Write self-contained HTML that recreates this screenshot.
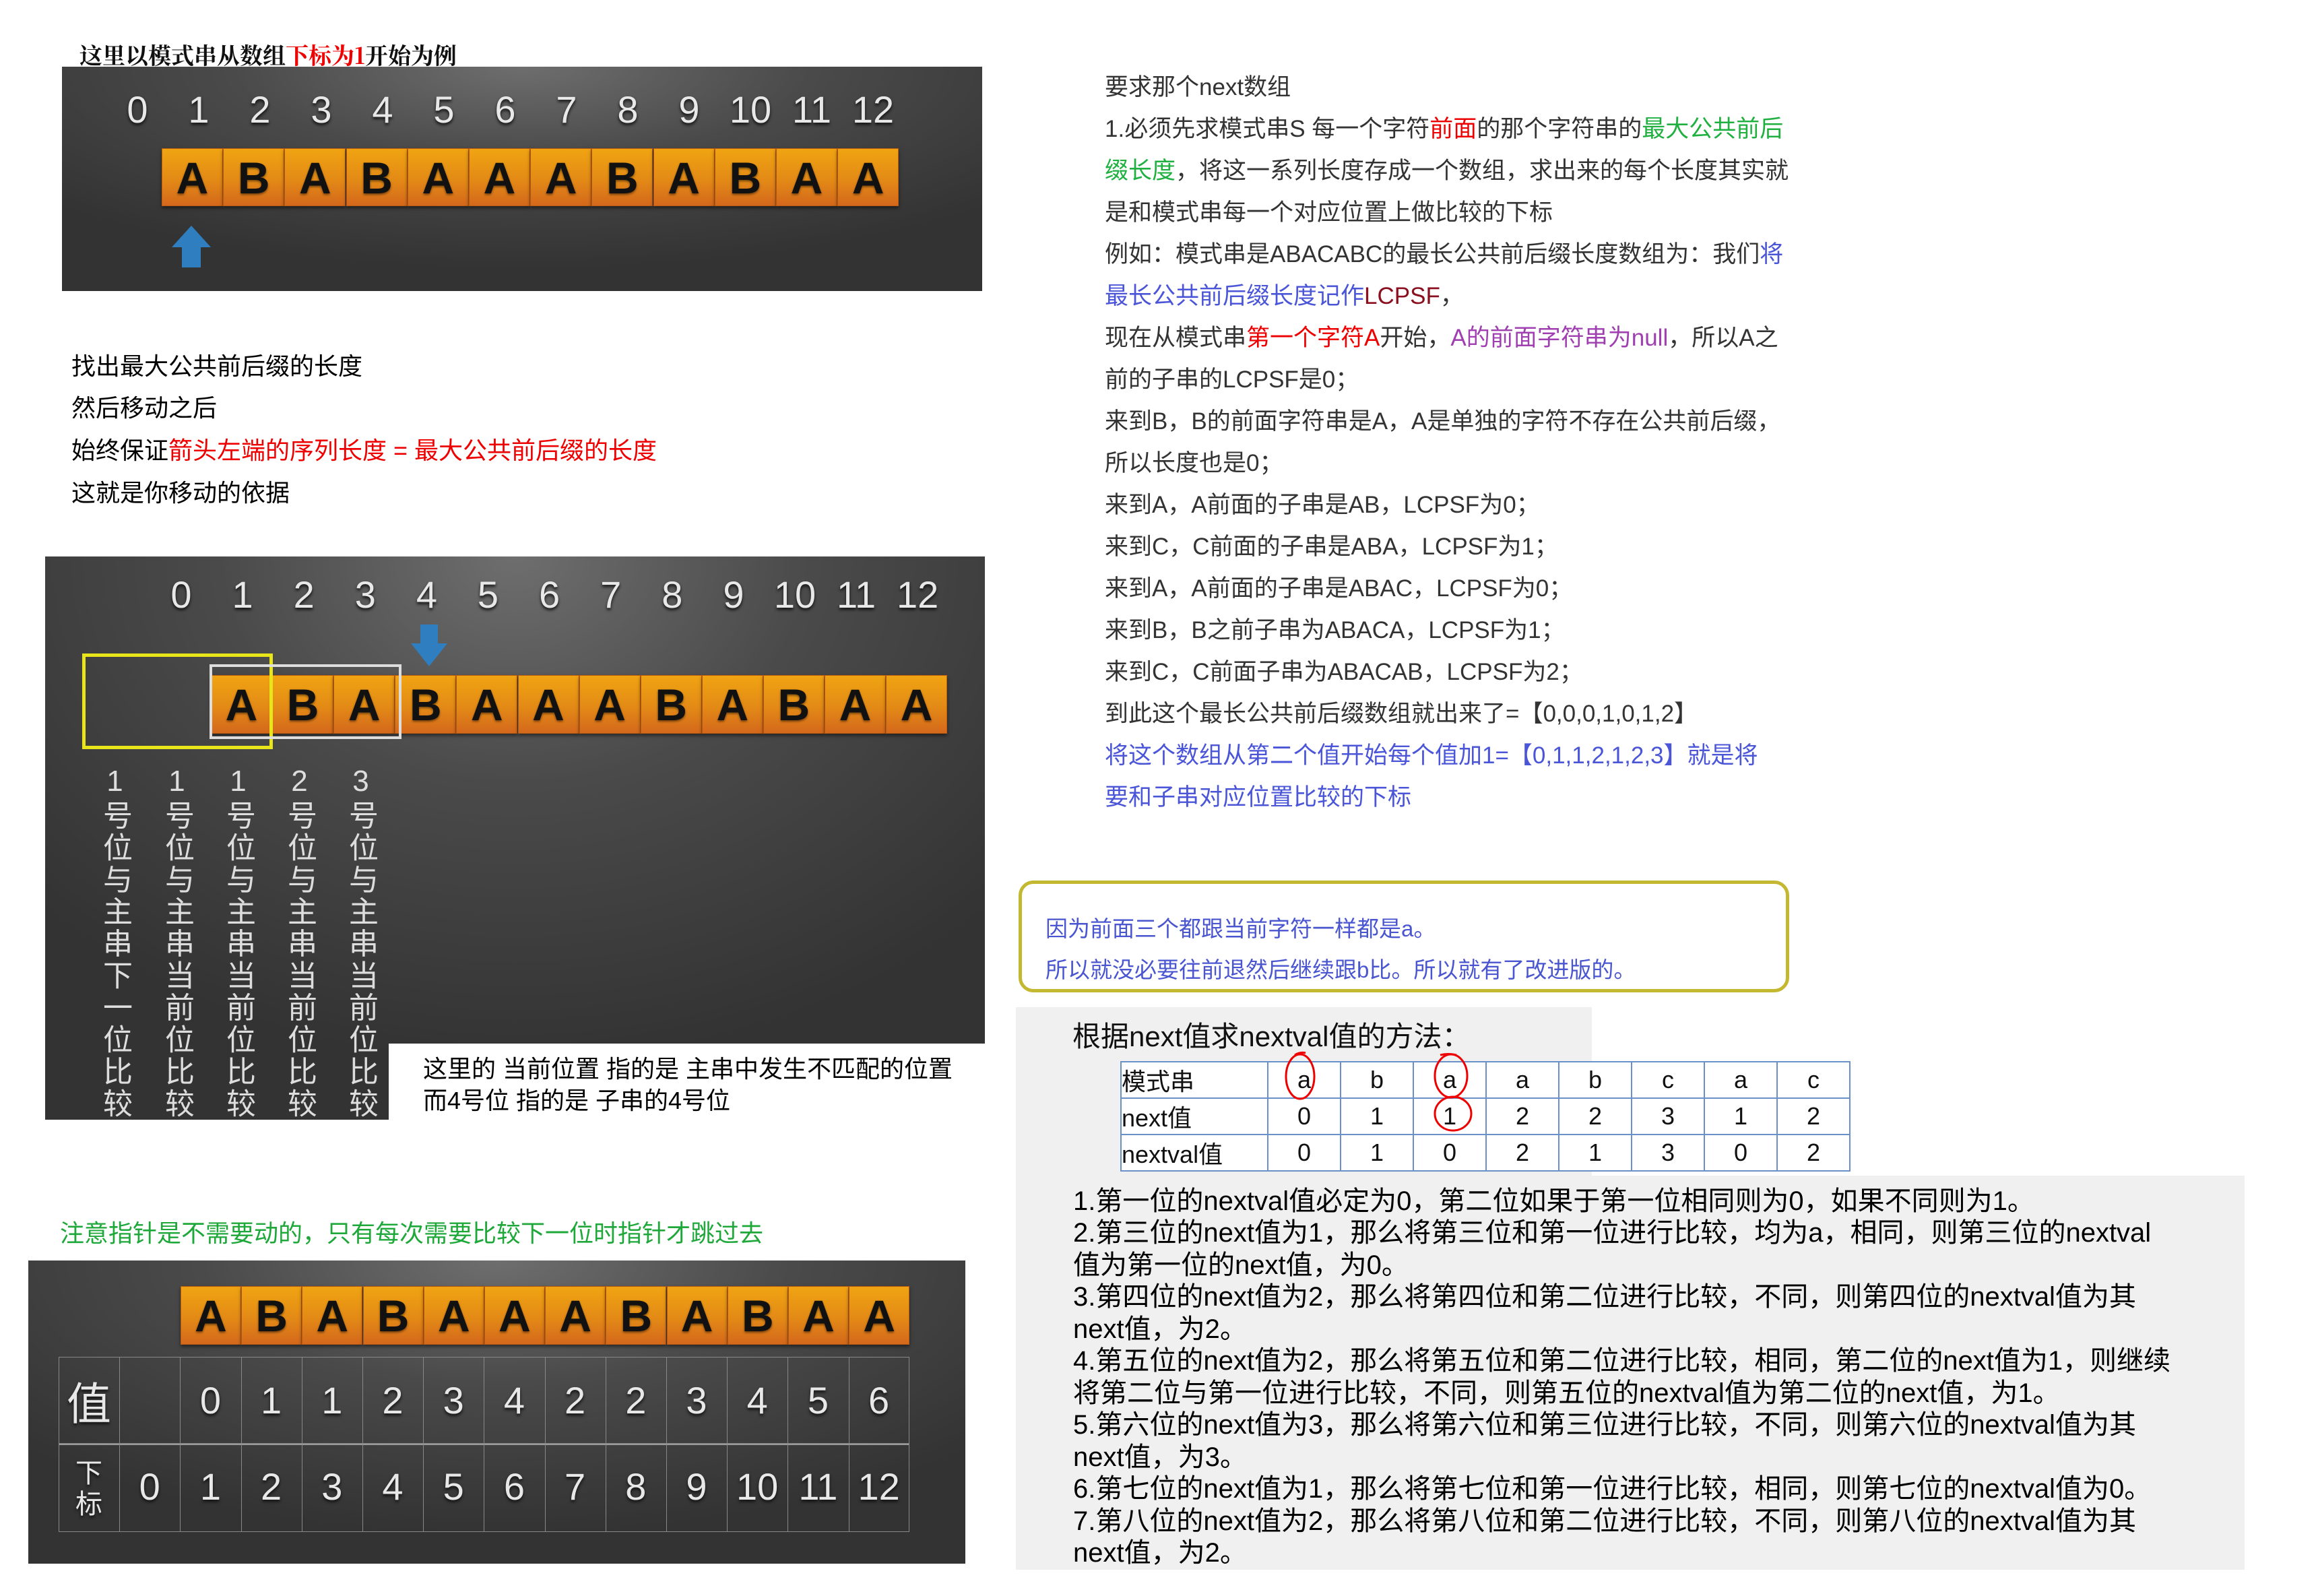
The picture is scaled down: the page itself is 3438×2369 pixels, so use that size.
<!DOCTYPE html>
<html><head><meta charset="utf-8">
<style>
*{margin:0;padding:0;box-sizing:border-box}
body{width:3438px;height:2369px;background:#fff;position:relative;overflow:hidden;font-family:"Liberation Sans","Noto Sans CJK SC",sans-serif}
.a{position:absolute;white-space:nowrap}
.panel{position:absolute;background:radial-gradient(ellipse 70% 90% at 50% 0%,#6e6e6e 0%,#4a4a4a 45%,#333 100%)}
.num{position:absolute;color:#e8e8e8;font-size:56px;text-align:center;width:90px;text-shadow:0 3px 4px #111;font-family:"Liberation Sans",sans-serif}
.tile{position:absolute;background:linear-gradient(#f0a412,#e38a16 55%,#d4681c);border:1px solid #b85a10;color:#111;font-weight:bold;font-size:66px;text-align:center;box-shadow:0 3px 5px rgba(0,0,0,.5);text-shadow:0 2px 3px rgba(0,0,0,.5)}
.vt{position:absolute;writing-mode:vertical-rl;text-orientation:upright;color:#ddd;font-size:44px;letter-spacing:3.5px;top:1135px;font-family:"Liberation Sans","Noto Sans CJK SC",sans-serif}
.r{font-size:35px;color:#333;left:1640px}
.l{font-size:36px;color:#000;left:106px}
.li{font-size:40px;color:#000;left:1593px}
table{border-collapse:collapse}
td{border:2px solid #6a90c8;font-size:36px;height:49px;text-align:center;color:#111}
</style></head><body>

<div class="a" style="left:118px;top:56px;font-size:34px;font-family:'Noto Serif CJK SC',serif;font-weight:bold;color:#111">这里以模式串从数组<span style="color:#e00">下标为1</span>开始为例</div>

<div class="panel" style="left:92px;top:99px;width:1366px;height:333px"></div>
<div id="p1"></div>
<svg class="a" style="left:253px;top:333px" width="62" height="66"><path d="M31 2 L60 34 L45 34 L45 64 L17 64 L17 34 L2 34 Z" fill="#2f7fc0"/></svg>

<div class="a l" style="top:515px">找出最大公共前后缀的长度</div>
<div class="a l" style="top:577px">然后移动之后</div>
<div class="a l" style="top:640px">始终保证<span style="color:#e00">箭头左端的序列长度 = 最大公共前后缀的长度</span></div>
<div class="a l" style="top:703px">这就是你移动的依据</div>

<div class="panel" style="left:67px;top:826px;width:1395px;height:836px"></div>
<div id="p2"></div>
<div class="a" style="left:122px;top:970px;width:283px;height:142px;border:5px solid #e8e61a"></div>
<div class="a" style="left:311px;top:986px;width:285px;height:111px;border:4px solid #ddd"></div>
<svg class="a" style="left:608px;top:925px" width="58" height="66"><path d="M16 2 L42 2 L42 30 L56 30 L29 64 L2 30 L16 30 Z" fill="#2f7fc0"/></svg>
<div class="vt" style="left:138px">1号位与主串下一位比较</div>
<div class="vt" style="left:230px">1号位与主串当前位比较</div>
<div class="vt" style="left:321px">1号位与主串当前位比较</div>
<div class="vt" style="left:412px">2号位与主串当前位比较</div>
<div class="vt" style="left:503px">3号位与主串当前位比较</div>
<div class="a" style="left:577px;top:1549px;width:900px;height:130px;background:#fff"></div>
<div class="a" style="left:628px;top:1558px;font-size:36px;color:#000">这里的 当前位置 指的是 主串中发生不匹配的位置</div>
<div class="a" style="left:628px;top:1605px;font-size:36px;color:#000">而4号位 指的是 子串的4号位</div>

<div class="a" style="left:89px;top:1802px;font-size:36px;color:#1fa83a">注意指针是不需要动的，只有每次需要比较下一位时指针才跳过去</div>

<div class="panel" style="left:42px;top:1871px;width:1391px;height:450px"></div>
<div id="p3"></div>

<div class="a r" style="top:101px">要求那个next数组</div>
<div class="a r" style="top:163px">1.必须先求模式串S 每一个字符<span style="color:#e00">前面</span>的那个字符串的<span style="color:#1fb040">最大公共前后</span></div>
<div class="a r" style="top:225px"><span style="color:#1fb040">缀长度</span>，将这一系列长度存成一个数组，求出来的每个长度其实就</div>
<div class="a r" style="top:287px">是和模式串每一个对应位置上做比较的下标</div>
<div class="a r" style="top:349px">例如：模式串是ABACABC的最长公共前后缀长度数组为：我们<span style="color:#4a55d8">将</span></div>
<div class="a r" style="top:411px"><span style="color:#4a55d8">最长公共前后缀长度记作</span><span style="color:#8a1020">LCPSF</span>，</div>
<div class="a r" style="top:473px">现在从模式串<span style="color:#e00">第一个字符A</span>开始，<span style="color:#a040b0">A的前面字符串为null</span>，所以A之</div>
<div class="a r" style="top:535px">前的子串的LCPSF是0；</div>
<div class="a r" style="top:597px">来到B，B的前面字符串是A，A是单独的字符不存在公共前后缀，</div>
<div class="a r" style="top:659px">所以长度也是0；</div>
<div class="a r" style="top:721px">来到A，A前面的子串是AB，LCPSF为0；</div>
<div class="a r" style="top:783px">来到C，C前面的子串是ABA，LCPSF为1；</div>
<div class="a r" style="top:845px">来到A，A前面的子串是ABAC，LCPSF为0；</div>
<div class="a r" style="top:907px">来到B，B之前子串为ABACA，LCPSF为1；</div>
<div class="a r" style="top:969px">来到C，C前面子串为ABACAB，LCPSF为2；</div>
<div class="a r" style="top:1031px">到此这个最长公共前后缀数组就出来了=【0,0,0,1,0,1,2】</div>
<div class="a r" style="top:1093px;color:#4a55d8">将这个数组从第二个值开始每个值加1=【0,1,1,2,1,2,3】就是将</div>
<div class="a r" style="top:1155px;color:#4a55d8">要和子串对应位置比较的下标</div>

<div class="a" style="left:1512px;top:1307px;width:1144px;height:166px;border:5px solid #c4b830;border-radius:22px"></div>
<div class="a" style="left:1552px;top:1352px;font-size:33px;color:#4a55d0">因为前面三个都跟当前字符一样都是a。</div>
<div class="a" style="left:1552px;top:1413px;font-size:33px;color:#4a55d0">所以就没必要往前退然后继续跟b比。所以就有了改进版的。</div>

<div class="a" style="left:1508px;top:1495px;width:855px;height:260px;background:#f0f0f0"></div>
<div class="a" style="left:1508px;top:1745px;width:1824px;height:585px;background:#f0f0f0"></div>
<div class="a" style="left:1592px;top:1505px;font-size:42px;color:#111">根据next值求nextval值的方法：</div>
<table class="a" style="left:1663px;top:1575px;background:#fff">
<tr><td style="width:218px;text-align:left">模式串</td><td style="width:108px">a</td><td style="width:108px">b</td><td style="width:108px">a</td><td style="width:108px">a</td><td style="width:108px">b</td><td style="width:108px">c</td><td style="width:108px">a</td><td style="width:108px">c</td></tr>
<tr><td style="text-align:left">next值</td><td>0</td><td>1</td><td>1</td><td>2</td><td>2</td><td>3</td><td>1</td><td>2</td></tr>
<tr><td style="text-align:left">nextval值</td><td>0</td><td>1</td><td>0</td><td>2</td><td>1</td><td>3</td><td>0</td><td>2</td></tr>
</table>
<svg class="a" style="left:1900px;top:1560px" width="300" height="140" fill="none" stroke="#e00" stroke-width="3">
<ellipse cx="30" cy="38" rx="21" ry="33"/>
<path d="M22 6 Q30 1 38 3"/>
<ellipse cx="254" cy="37" rx="24" ry="32"/>
<path d="M238 6 Q250 3 262 6"/>
<ellipse cx="257" cy="93" rx="27" ry="25"/>
</svg>
<div class="a li" style="top:1750px">1.第一位的nextval值必定为0，第二位如果于第一位相同则为0，如果不同则为1。</div>
<div class="a li" style="top:1797px">2.第三位的next值为1，那么将第三位和第一位进行比较，均为a，相同，则第三位的nextval</div>
<div class="a li" style="top:1845px">值为第一位的next值，为0。</div>
<div class="a li" style="top:1892px">3.第四位的next值为2，那么将第四位和第二位进行比较，不同，则第四位的nextval值为其</div>
<div class="a li" style="top:1940px">next值，为2。</div>
<div class="a li" style="top:1987px">4.第五位的next值为2，那么将第五位和第二位进行比较，相同，第二位的next值为1，则继续</div>
<div class="a li" style="top:2035px">将第二位与第一位进行比较，不同，则第五位的nextval值为第二位的next值，为1。</div>
<div class="a li" style="top:2082px">5.第六位的next值为3，那么将第六位和第三位进行比较，不同，则第六位的nextval值为其</div>
<div class="a li" style="top:2130px">next值，为3。</div>
<div class="a li" style="top:2177px">6.第七位的next值为1，那么将第七位和第一位进行比较，相同，则第七位的nextval值为0。</div>
<div class="a li" style="top:2225px">7.第八位的next值为2，那么将第八位和第二位进行比较，不同，则第八位的nextval值为其</div>
<div class="a li" style="top:2272px">next值，为2。</div>

<script>
var S="ABABAAABABAA".split("");
function add(id,h){document.getElementById(id).outerHTML=h;}
var h="";
for(var i=0;i<13;i++)h+='<div class="num" style="left:'+(159+i*91)+'px;top:130px">'+i+'</div>';
for(var i=0;i<12;i++)h+='<div class="tile" style="left:'+(240+i*91.2)+'px;top:220px;width:91px;height:86px;line-height:86px">'+S[i]+'</div>';
add("p1",h);
h="";
for(var i=0;i<13;i++)h+='<div class="num" style="left:'+(224+i*91.1)+'px;top:850px">'+i+'</div>';
for(var i=0;i<12;i++)h+='<div class="tile" style="left:'+(313+i*91.1)+'px;top:1002px;width:91px;height:87px;line-height:87px">'+S[i]+'</div>';
add("p2",h);
h="";
for(var i=0;i<12;i++)h+='<div class="tile" style="left:'+(268+i*90.2)+'px;top:1909px;width:90px;height:87px;line-height:87px">'+S[i]+'</div>';
var v=[0,1,1,2,3,4,2,2,3,4,5,6];
for(var c=0;c<14;c++){var x=87+c*90.2;
 h+='<div class="a" style="left:'+x+'px;top:2014px;width:90.2px;height:129px;border:1px solid #888;border-right:none"></div>';
 h+='<div class="a" style="left:'+x+'px;top:2143px;width:90.2px;height:131px;border:1px solid #888;border-right:none;border-top:2px solid #999"></div>';
 var t1="",t2="";
 if(c==0){t1='<span style="font-size:66px;font-family:Noto Sans CJK SC">值</span>';t2='<span style="font-size:40px;line-height:46px;display:inline-block;font-family:Noto Sans CJK SC">下<br>标</span>';}
 else if(c==1){t2="0";} else {t1=v[c-2];t2=c-1;}
 h+='<div class="num" style="left:'+x+'px;top:2044px;width:90px;line-height:70px">'+t1+'</div>';
 h+='<div class="num" style="left:'+x+'px;top:'+(c==0?2160:2172)+'px;width:90px;line-height:70px">'+t2+'</div>';
}
h+='<div class="a" style="left:1349px;top:2014px;height:260px;border-left:1px solid #888"></div>';
add("p3",h);
</script>
</body></html>
